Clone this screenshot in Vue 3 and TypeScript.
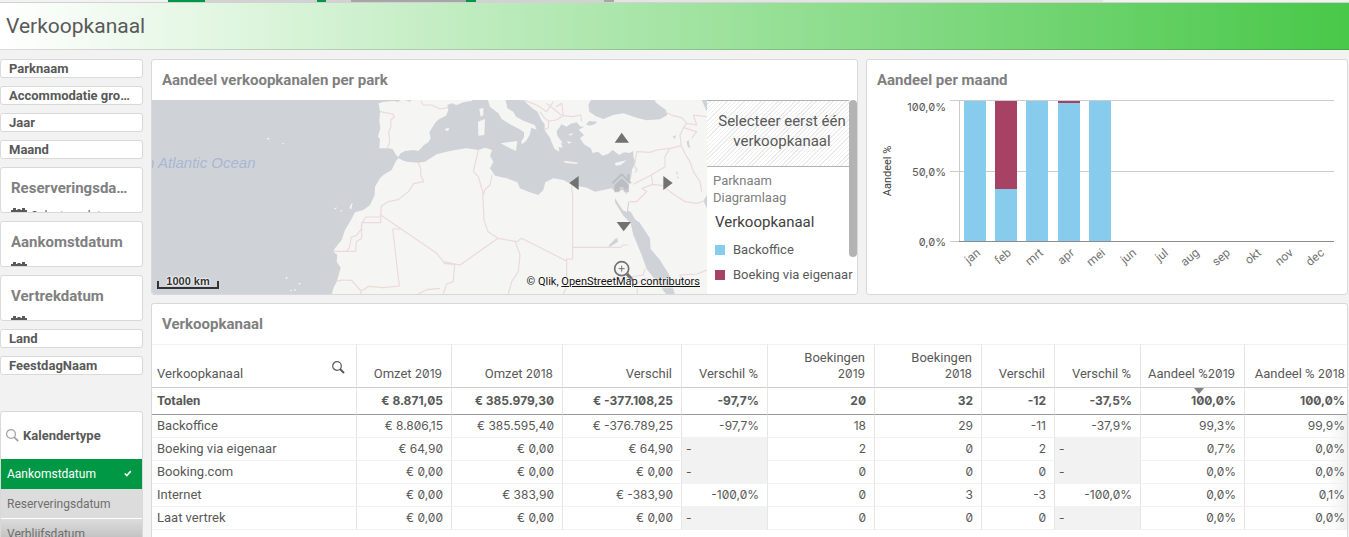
<script setup lang="ts">
interface Column { label: string; year?: string; width: number; stacked?: boolean }
interface Segment { x: number; y: number; h: number; color: string }

const topTabs = [
  { grow: 168, color: '#f2f2f2' }, { grow: 37, color: '#009845' }, { grow: 112, color: '#d2d2d2' },
  { grow: 9, color: '#009845' }, { grow: 25, color: '#d2d2d2' }, { grow: 115, color: '#a6a6a6' },
  { grow: 10, color: '#009845' }, { grow: 128, color: '#d2d2d2' }, { grow: 10, color: '#a6a6a6' },
  { grow: 489, color: '#e4e4e4' }, { grow: 246, color: '#f2f2f2' },
]
const filtersTop = ['Parknaam', 'Accommodatie groep', 'Jaar', 'Maand']
const dateFilters = [
  { name: 'Reserveringsdatum', hint: 'Selecteer datum' },
  { name: 'Aankomstdatum', hint: '' },
  { name: 'Vertrekdatum', hint: '' },
]
const filtersBottom = ['Land', 'FeestdagNaam']

const months = ['jan', 'feb', 'mrt', 'apr', 'mei', 'jun', 'jul', 'aug', 'sep', 'okt', 'nov', 'dec']
const step = 375 / 12
const blue = '#87cbed'
const red = '#a84265'
const bars: Segment[] = [
  { x: 97, y: 1, h: 140, color: blue },
  { x: 128, y: 1, h: 88, color: red },
  { x: 128, y: 89, h: 52, color: blue },
  { x: 159, y: 1, h: 140, color: blue },
  { x: 191, y: 1, h: 2, color: red },
  { x: 191, y: 3, h: 138, color: blue },
  { x: 222, y: 1, h: 140, color: blue },
]

const columns: Column[] = [
  { label: 'Verkoopkanaal', width: 205 },
  { label: 'Omzet ', year: '2019', width: 95 },
  { label: 'Omzet ', year: '2018', width: 111 },
  { label: 'Verschil', width: 119 },
  { label: 'Verschil %', width: 86 },
  { label: 'Boekingen ', year: '2019', width: 107, stacked: true },
  { label: 'Boekingen ', year: '2018', width: 107, stacked: true },
  { label: 'Verschil', width: 73 },
  { label: 'Verschil %', width: 86 },
  { label: 'Aandeel %', year: '2019', width: 104 },
  { label: 'Aandeel % ', year: '2018', width: 103 },
]
const totals = ['€ 8.871,05', '€ 385.979,30', '€ -377.108,25', '-97,7%', '20', '32', '-12', '-37,5%', '100,0%', '100,0%']
const rows = [
  ['Backoffice', '€ 8.806,15', '€ 385.595,40', '€ -376.789,25', '-97,7%', '18', '29', '-11', '-37,9%', '99,3%', '99,9%'],
  ['Boeking via eigenaar', '€ 64,90', '€ 0,00', '€ 64,90', '-', '2', '0', '2', '-', '0,7%', '0,0%'],
  ['Booking.com', '€ 0,00', '€ 0,00', '€ 0,00', '-', '0', '0', '0', '-', '0,0%', '0,0%'],
  ['Internet', '€ 0,00', '€ 383,90', '€ -383,90', '-100,0%', '0', '3', '-3', '-100,0%', '0,0%', '0,1%'],
  ['Laat vertrek', '€ 0,00', '€ 0,00', '€ 0,00', '-', '0', '0', '0', '-', '0,0%', '0,0%'],
]
</script>

<template>
  <div class="page">
    <div class="tabs"><i v-for="(t, i) in topTabs" :key="i" :style="{ flexGrow: t.grow, background: t.color }"></i></div>
    <header class="head"><h1>Verkoopkanaal</h1></header>
    <div class="body">
      <aside class="side">
        <button v-for="f in filtersTop" :key="f" class="filter">{{ f }}</button>
        <section v-for="d in dateFilters" :key="d.name" class="date">
          <h2>{{ d.name }}</h2>
          <button class="pick" :aria-label="d.name">
            <svg width="16" height="16" viewBox="0 0 16 16"><path d="M0 2h2V0h3v2h1.500V1h3v1H11V0h3v2h2v14H0z" fill="#595959" /><path d="M2 6h12v8H2z" fill="#fff" /></svg>
            <span>{{ d.hint }}</span>
          </button>
        </section>
        <button v-for="f in filtersBottom" :key="f" class="filter">{{ f }}</button>
        <section class="list">
          <h3>
            <svg width="13" height="13" viewBox="0 0 13 13" fill="none" stroke="#a0a0a0"><circle cx="5" cy="5" r="4.400" stroke-width="1.200" /><path d="M8.200 8.200l4 4" stroke-width="1.800" /></svg>
            Kalendertype
          </h3>
          <button class="opt on">Aankomstdatum
            <svg width="8" height="7" viewBox="0 0 10 8"><path d="M1 4l2.500 2.500L8.500 1" fill="none" stroke="#fff" stroke-width="2" /></svg>
          </button>
          <button class="opt">Reserveringsdatum</button>
          <button class="opt last">Verblijfsdatum</button>
        </section>
      </aside>

      <main class="main">
        <div class="row">
          <section class="card">
            <h2 class="title">Aandeel verkoopkanalen per park</h2>
            <div class="mapbox">
              <div class="map">
                <svg class="geo" viewBox="0 0 1665 582" preserveAspectRatio="xMidYMid slice">
                  <rect width="1665" height="582" fill="#f5f5f3" />
                  <g transform="translate(-6 -15)">
                    <path fill="#cfd3d8" d="M0 10H750L780 20 785 15H752L745 20 730 18 703 20 686 25 690 50 688 80 691 100 684 125 690 132 688 160 715 160 728 162 738 180 745 186 752 175 765 168 790 165 805 168 822 150 835 142 842 130 838 112 850 92 858 80 868 72 888 62 895 45 892 30 905 25 920 30 940 22 965 18 970 10H1012L1020 35 1045 55 1055 72 1080 88 1108 102 1122 112 1122 125 1114 140 1116 148 1128 138 1139 120 1144 98 1160 104 1154 90 1120 77 1098 65 1090 50 1072 40 1066 10H1118L1130 25 1150 42 1163 50 1174 75 1184 88 1184 106 1200 128 1206 145 1214 162 1228 170 1226 156 1238 158 1232 142 1240 146 1222 122 1220 108 1230 95 1234 88 1250 95 1262 86 1280 82 1290 94 1302 96 1286 104 1302 120 1290 130 1302 148 1322 160 1328 174 1344 170 1358 182 1375 176 1388 165 1408 180 1422 172 1438 174 1450 168 1450 185 1456 200 1446 225 1443 250 1432 282 1396 290 1385 280 1360 285 1335 290 1310 278 1268 270 1240 255 1210 250 1186 262 1180 285 1165 300 1135 290 1110 280 1102 262 1070 250 1035 242 1020 220 1030 200 1020 182 1026 165 1005 158 985 165 950 160 915 165 890 170 860 178 825 200 805 203 770 200 755 195 745 189 736 202 725 225 700 240 690 250 675 275 674 300 660 330 640 345 615 352 600 380 585 405 575 435 555 460 550 470 562 480 560 500 572 518 560 560 550 580 545 600H0z" />
                    <path fill="#cfd3d8" d="M1325 10L1315 30 1318 50 1338 64 1360 72 1390 60 1420 55 1460 68 1490 76 1530 73 1552 60 1548 45 1520 25 1510 10zM1308 88L1318 78 1342 80 1334 88 1318 92zM1395 310L1418 345 1430 352 1435 320 1438 322 1434 347 1442 350 1456 374 1468 382 1500 430 1502 462 1530 495 1558 540 1575 600H1550L1520 560 1490 522 1475 480 1450 420 1442 385 1420 362 1395 322zM1655 15H1680V60L1668 45zM1660 318L1671 300V340zM1610 140L1616 135 1620 160 1613 155zM1568 125L1578 120 1574 132zM1578 230H1582V250H1587L1580 238zM1395 432L1402 428 1404 440 1380 455 1375 460 1378 450z" />
                    <path fill="#f5f5f3" d="M988 42L1000 38 1000 60 992 65zM984 80L1005 72 1003 120 985 122zM884 102L896 98 897 104 890 109zM1052 145L1102 138 1098 168 1080 160zM1242 197L1284 203 1280 207 1245 203zM1394 204L1410 200 1430 196 1412 210 1398 212zM1255 118L1270 114 1262 122zM1250 138L1265 142 1256 146zM350 130L358 129 358 134 352 133zM398 144h4v3h-4zM551 342l9-6-2 7zM570 346l8 0-5 4zM598 340l6-14 4-2-4 18zM407 546h5v5h-5zM446 564h6v4h-6zM420 585h6v3h-6zM432 583h5v4h-5z" />
                    <g fill="none" stroke="#ecd9d9" stroke-width="3.500" stroke-linejoin="round">
                      <path d="M690 50L728 57 733 66 722 75 723 96 716 110 719 140 712 160M812 18L820 30 845 30 870 42 895 38M805 203L812 220 812 240 821 260 790 266 786 274 775 290 745 314 714 320 694 334 692 360 860 475 880 500 930 510 1044 430 1100 440 1115 430 1248 497M692 360V383H635V430L619 440 617 469H550M690 366H648L635 385 634 402 619 422 604 426 598 458 590 469M757 402H728L748 573 700 578 656 574 640 585 630 585 605 556 575 555 558 560M804 597L830 584 870 580M880 505L914 508 910 560 890 567 880 597M634 597L632 585" />
                      <path d="M985 165L970 230 985 245 998 290 1002 375 1014 410 1044 430M1026 240L1020 270 1004 285 1000 300M1096 440L1110 480 1105 530 1085 560 1075 597M1264 272L1268 300V457H1412L1420 450H1435M1268 457V492H1250V545L1238 555 1248 580 1240 597M1428 298L1438 262M1438 320H1460L1490 290 1476 280 1508 268 1504 240 1450 268M1454 232L1462 225 1453 215 1460 170 1500 172 1520 165 1560 160 1545 185 1545 215 1504 240M1508 268L1538 272 1560 290 1605 320 1640 325 1664 318M1560 160L1594 152 1606 178 1620 200 1630 230 1650 260 1655 290M1594 152L1590 120 1600 98 1640 110 1625 130M1545 50L1570 62 1595 68 1610 85 1640 90 1630 60 1670 65M1610 85L1600 98M1120 15L1160 30 1190 50 1210 20M1170 50L1184 70 1196 78 1218 75 1240 62 1270 65 1292 60 1295 80M1196 78L1195 98 1184 105M1190 25L1215 45 1235 62M1218 35L1235 25 1240 62M1280 572L1480 540 1485 520M1462 597V565L1485 550 1520 560M1595 560L1590 540 1640 537 1671 525" />
                    </g>
                    <path fill="#727272" d="M1415 113L1437 143H1394zM1258 264L1286 243V285zM1568 264L1540 243V285zM1421 409L1400 381H1443z" />
                    <g opacity=".55">
                      <path d="M1387 265L1415 238 1443 265" fill="none" stroke="#a9adb2" stroke-width="6" />
                      <path d="M1432 238H1438V256L1432 250zM1415 250L1437 271V292H1421V276H1409V292H1393V271z" fill="#a9adb2" />
                    </g>
                    <circle cx="1415" cy="521" r="21" fill="none" stroke="#727272" stroke-width="5" />
                    <path d="M1431 537L1448 556" stroke="#727272" stroke-width="10" />
                    <path d="M1406 521H1424M1415 512V530" stroke="#727272" stroke-width="3" />
                  </g>
                </svg>
                <span class="ocean">n Atlantic Ocean</span>
                <span class="scale">1000 km</span>
                <span class="credit">© Qlik, <a href="#">OpenStreetMap contributors</a></span>
              </div>
              <div class="legend">
                <p class="hatch">Selecteer eerst één verkoopkanaal</p>
                <div class="leg">
                  <p class="layer">Parknaam<br />Diagramlaag</p>
                  <h4>Verkoopkanaal</h4>
                  <p class="key"><i class="blue"></i>Backoffice</p>
                  <p class="key"><i class="red"></i>Boeking via eigenaar</p>
                </div>
                <span class="thumb"></span>
              </div>
            </div>
          </section>
          <section class="card">
            <h2 class="title">Aandeel per maand</h2>
            <svg class="chart" viewBox="0 0 480 194">
              <path d="M83 .5H467M83 71.500H467M92.500 0V141" stroke="#ccc" fill="none" />
              <path d="M83 141.500H92" stroke="#ccc" /><path d="M92 141.500H467" stroke="#8c8c8c" />
              <rect v-for="(b, i) in bars" :key="i" :x="b.x" :y="b.y" width="22" :height="b.h" :fill="b.color" />
              <g class="num" text-anchor="end">
                <text x="79" y="11">100,0%</text><text x="79" y="76">50,0%</text><text x="79" y="146">0,0%</text>
              </g>
              <text class="ylab" transform="translate(24 71) rotate(-90)" text-anchor="middle">Aandeel %</text>
              <text v-for="(m, i) in months" :key="m" class="mon" text-anchor="end" :transform="`translate(${Math.round(114 + i * step)} 154) rotate(-40)`">{{ m }}</text>
            </svg>
          </section>
        </div>

        <section class="card tablecard">
          <h2 class="title">Verkoopkanaal</h2>
          <table>
            <colgroup><col v-for="(c, i) in columns" :key="i" :style="{ width: c.width + 'px' }" /></colgroup>
            <thead>
              <tr>
                <th v-for="(c, i) in columns" :key="i" scope="col">
                  <div v-if="i === 0" class="dim">
                    <span>{{ c.label }}</span>
                    <button class="find" aria-label="Zoeken">
                      <svg width="13" height="13" viewBox="0 0 13 13" fill="none" stroke="#595959"><circle cx="5" cy="5" r="4.300" stroke-width="1.200" /><path d="M8 8l4 4" stroke-width="2" /></svg>
                    </button>
                  </div>
                  <template v-else>{{ c.label }}<span v-if="c.year" class="yr" :class="{ stacked: c.stacked }">{{ c.year }}</span></template>
                </th>
              </tr>
              <tr class="tot">
                <th scope="row">Totalen</th>
                <td v-for="(t, i) in totals" :key="i"><i v-if="i === 8" class="sort"></i>{{ t }}</td>
              </tr>
            </thead>
            <tbody>
              <tr v-for="r in rows" :key="r[0]">
                <td v-for="(c, i) in r" :key="i" :class="{ none: c === '-' }">{{ c }}</td>
              </tr>
            </tbody>
          </table>
        </section>
      </main>
    </div>
  </div>
</template>

<style>
body { margin: 0; background: #f2f2f2; }
</style>
<style scoped>
* { box-sizing: border-box; }
h1, h2, h3, h4, p { margin: 0; }
button { font: inherit; color: inherit; border: 0; background: none; padding: 0; text-align: left; }
.page { height: 100vh; overflow: hidden; display: flex; flex-direction: column; background: #f2f2f2; color: #595959; font: 13px/16px Roboto, "Liberation Sans", sans-serif; }
.tabs { display: flex; height: 2px; flex: none; }
.head { flex: none; height: 48px; padding-left: 6px; border-top: 1px solid #d2d2d2; border-bottom: 1px solid rgba(0, 0, 0, .14); background: linear-gradient(90deg, #fff, #48c848); display: flex; align-items: center; }
h1 { font-size: 21px; line-height: 28px; font-weight: 400; }
.body { flex: 1; min-height: 0; display: flex; gap: 8px; padding: 9px 1px 0 0; }
.side { width: 143px; flex: none; display: flex; flex-direction: column; gap: 8px; }
.side > * { flex: none; background: #fff; border: 1px solid #d9d9d9; border-radius: 3px; }
.filter { height: 19px; padding: 0 8px; font-weight: 700; line-height: 17px; white-space: nowrap; overflow: hidden; text-overflow: ellipsis; }
.date { height: 46px; overflow: hidden; padding: 11px 10px 0; }
.date h2 { font-size: 15px; line-height: 18px; color: #808080; white-space: nowrap; overflow: hidden; text-overflow: ellipsis; }
.pick { display: flex; gap: 4px; margin-top: 11px; font-size: 12px; line-height: 16px; }
.side .list { margin-top: 28px; overflow: hidden; height: 140px; }
.list h3 { display: flex; align-items: center; gap: 4px; height: 47px; padding-left: 5px; font-size: 13px; }
.opt { display: flex; justify-content: space-between; align-items: center; width: 100%; height: 30px; padding: 0 10px 0 6px; background: #dcdcdc; border-bottom: 1px solid #fff; color: #6e6e6e; font-size: 12px; }
.opt.on { background: #009845; border-color: #009845; color: #fff; }
.opt.last { background: linear-gradient(#dcdcdc, #c4c4c4 18px); }
.main { flex: 1; min-width: 0; display: flex; flex-direction: column; gap: 8px; }
.row { display: grid; grid-template-columns: 707fr 482fr; gap: 8px; }
.card { min-width: 0; background: #fff; border: 1px solid #d9d9d9; border-radius: 3px; overflow: hidden; }
.title { height: 40px; padding-left: 10px; font-size: 15px; line-height: 40px; color: #808080; }
.mapbox { display: flex; height: 194px; }
.map { flex: 1; min-width: 0; position: relative; overflow: hidden; }
.geo { display: block; width: 100%; height: 100%; }
.ocean { position: absolute; left: -6px; top: 54px; font: italic 15px/18px "Liberation Sans", sans-serif; color: #a9b7d3; }
.scale { position: absolute; left: 5px; bottom: 5px; width: 62px; height: 8px; border: 2px solid #333; border-top: 0; font: bold 11px/0 "Liberation Sans", sans-serif; color: #333; text-align: center; text-shadow: 0 0 2px #fff, 0 0 2px #fff, 0 0 2px #fff; }
.credit { position: absolute; right: 7px; bottom: 5px; font-size: 11px; line-height: 14px; color: #111; text-shadow: 0 0 2px #fff, 0 0 2px #fff; }
.credit a { color: inherit; }
.legend { width: 150px; flex: none; position: relative; }
.hatch { width: 142px; height: 67px; padding: 10px 0 0 8px; text-align: center; font-size: 15px; line-height: 20px; border-top: 1px solid #b3b3b3; border-bottom: 1px solid #b3b3b3; background: repeating-linear-gradient(135deg, #fff 0 2px, #ececec 2px 3px); }
.leg { padding: 5px 0 0 6px; white-space: nowrap; }
.layer { line-height: 17px; color: #808080; }
h4 { margin: 7px 0 5px 2px; font-size: 15px; line-height: 19px; font-weight: 400; color: #404040; }
.key { display: flex; align-items: center; gap: 8px; height: 25px; padding-left: 2px; }
.key i { width: 10px; height: 10px; }
.blue { background: #87cbed; }
.red { background: #a84265; }
.thumb { position: absolute; right: 0; top: 0; width: 8px; height: 157px; border-radius: 4px; background: #b3b3b3; }
.chart { display: block; width: 100%; height: 194px; }
.chart text { fill: #595959; font-size: 12px; }
.chart .mon { fill: #737373; }
.chart .num text { font-size: 11px; }
.num, .yr, tbody td + td, .tot td { font-family: Inter, Roboto, sans-serif; font-feature-settings: "zero"; font-size: 12px; }
.chart .ylab { fill: #404040; font-size: 11px; }
.stacked { display: block; }
.tablecard { flex: 1; border-bottom: 0; border-radius: 3px 3px 0 0; }
table { width: 100%; table-layout: fixed; border-collapse: separate; border-spacing: 0; }
th, td { padding: 0 8px 0 5px; height: 23px; text-align: right; font-weight: 400; white-space: nowrap; border-right: 1px solid #e6e6e6; border-bottom: 1px solid #f2f2f2; }
th:last-child, td:last-child, thead tr th:last-child { border-right: 0; padding-right: 3px; }
th:first-child, td:first-child { text-align: left; }
thead th { height: 44px; vertical-align: bottom; padding: 5px 9px 5px 5px; white-space: normal; border-top: 1px solid #f2f2f2; border-bottom: 1px solid #ccc; }
.dim { display: flex; justify-content: space-between; align-items: flex-end; }
.find { display: flex; align-items: flex-start; height: 21px; padding-right: 2px; }
.tot th, .tot td { height: 27px; padding-top: 0; padding-bottom: 0; vertical-align: middle; font-weight: 700; border-top: 0; border-bottom: 1px solid #999; position: relative; }
.sort { position: absolute; left: 53px; top: 0; border: 5px solid transparent; border-top: 6px solid #808080; border-bottom: 0; }
tbody td.none { text-align: left; background: #f2f2f2; padding-left: 4px; }
tbody td:last-child { background: linear-gradient(90deg, transparent 80%, rgba(0, 0, 0, .06)); }
</style>
